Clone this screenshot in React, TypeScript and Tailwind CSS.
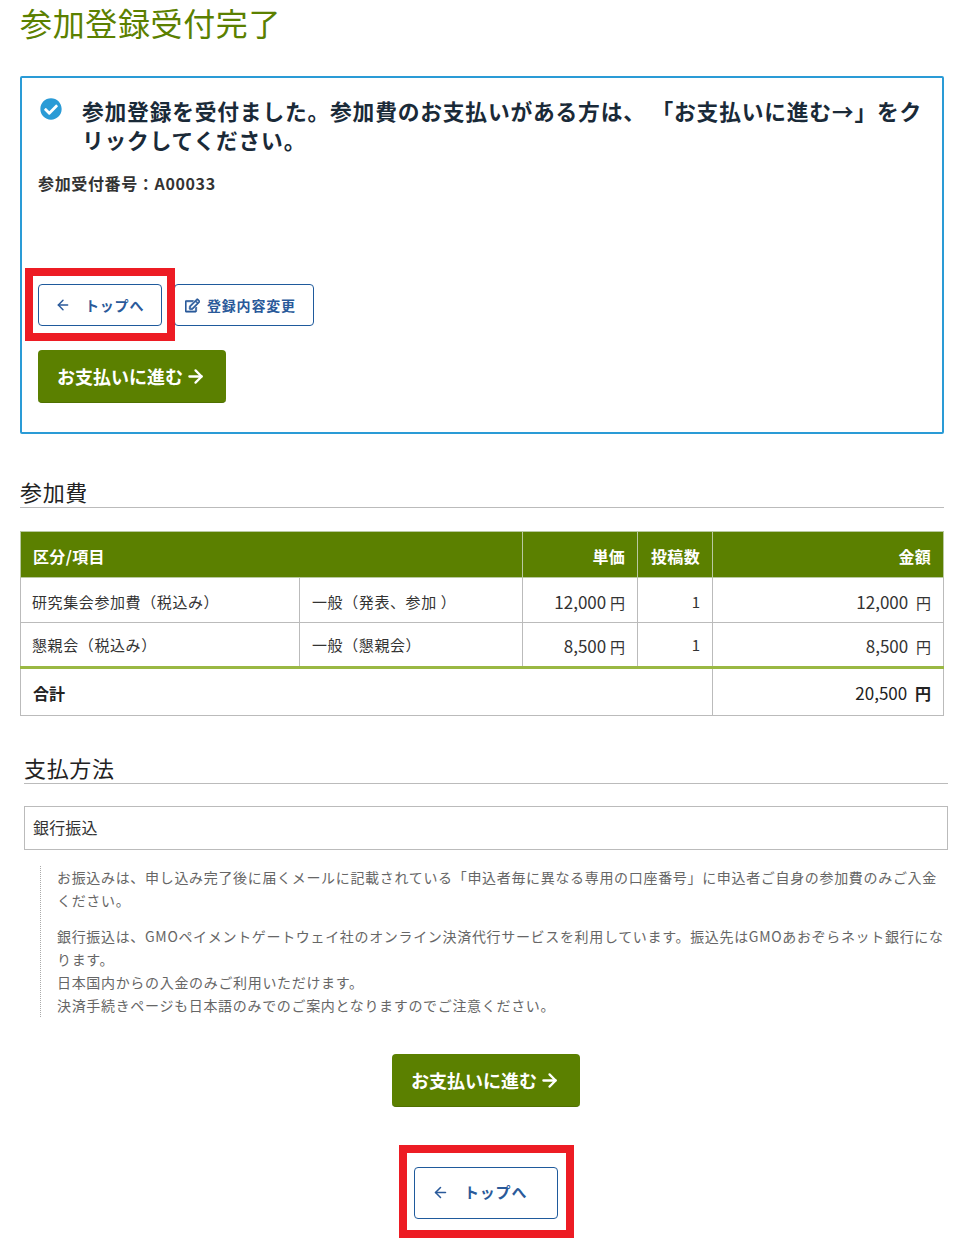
import React from 'react';
import { ArrowLeft, ArrowRight } from 'lucide-react';
import { FaCheckCircle, FaRegEdit } from 'react-icons/fa';

const FONT = '"Noto Sans CJK JP", "Noto Sans", sans-serif';

function PayButton() {
  return (
    <button className="w-[188px] h-[53px] bg-[#5b8000] rounded-[4px] border-b border-[#4f7000] text-white text-[18px] font-bold tracking-normal flex items-center pl-[19px]">
      お支払いに進む
      <ArrowRight className="ml-[2px]" size={21} strokeWidth={2.6} />
    </button>
  );
}

function SectionTitle({ children, className }: { children: React.ReactNode; className: string }) {
  return (
    <h2 className={`text-[22px] leading-[26px] pb-[3px] tracking-[0.03em] text-[#222] border-b border-[#bbbbbb] ${className}`}>
      {children}
    </h2>
  );
}

export default function App() {
  return (
    <div
      className="relative h-[1239px] overflow-hidden bg-white text-[#222] tracking-[0.05em]"
      style={{ fontFamily: FONT }}
    >
      <h1 className="pl-5 text-[32px] leading-[44px] font-normal tracking-[0.02em] text-[#5b8000]">
        参加登録受付完了
      </h1>

      {/* Completion box */}
      <div className="mt-8 ml-5 w-[924px] h-[358px] border-2 border-[#2a9bd6] rounded-[2px] pt-[20px] pl-4">
        <div className="flex items-start">
          <FaCheckCircle className="ml-[2px] shrink-0 text-[#2a9bd6] text-[22px]" />
          <p className="ml-[20px] pr-3 -mt-[2px] text-[21.75px] leading-[29px] font-bold text-[#1a2a38]">
            参加登録を受付ました。参加費のお支払いがある方は、 「お支払いに進む→」をクリックしてください。
          </p>
        </div>
        <p className="mt-[17px] text-[16px] leading-[24px] font-bold tracking-[0.04em] text-[#333]">参加受付番号：A00033</p>

        <div className="mt-[89px] flex gap-3">
          <div className="relative">
            <button className="w-[124px] h-[42px] border border-[#1f5a9c] rounded-[4px] text-[#2a5a9a] text-[14px] font-bold flex items-center pl-[16px]">
              <ArrowLeft size={16} strokeWidth={2.2} />
              <span className="ml-[14px]">トップへ</span>
            </button>
            <div className="absolute -left-[13px] -top-[16px] -right-[13px] -bottom-[15px] border-[8px] border-[#ed1c24]" />
          </div>
          <button className="w-[140px] h-[42px] border border-[#1f5a9c] rounded-[4px] text-[#2a5a9a] text-[14px] font-bold flex items-center pl-[10px]">
            <FaRegEdit className="text-[15px]" stroke="currentColor" strokeWidth={24} />
            <span className="ml-[7px]">登録内容変更</span>
          </button>
        </div>

        <div className="mt-[24px]">
          <PayButton />
        </div>
      </div>

      {/* Fees */}
      <SectionTitle className="mt-[44px] ml-5 w-[924px]">参加費</SectionTitle>
      <table className="mt-[23px] ml-5 w-[923px] table-fixed border-collapse text-[15px] tracking-[0.04em]">
        <colgroup>
          <col className="w-[279px]" />
          <col className="w-[223px]" />
          <col className="w-[115px]" />
          <col className="w-[75px]" />
          <col className="w-[231px]" />
        </colgroup>
        <thead>
          <tr className="h-[46px] bg-[#5b8000] text-white text-[16px] font-bold">
            <th colSpan={2} className="border border-[#b9c9a0] px-3 pt-[3px] text-left tracking-[0.02em]">区分/項目</th>
            <th className="border border-[#b9c9a0] px-3 pt-[3px] text-right tracking-[0.02em]">単価</th>
            <th className="border border-[#b9c9a0] px-3 pt-[3px] text-right tracking-[0.02em]">投稿数</th>
            <th className="border border-[#b9c9a0] px-3 pt-[3px] text-right tracking-[0.02em]">金額</th>
          </tr>
        </thead>
        <tbody className="text-[#333]">
          <tr className="h-[45px]">
            <td className="border border-[#bbbbbb] pl-[11px] pr-3 pt-[4px]">研究集会参加費（税込み）</td>
            <td className="border border-[#bbbbbb] px-3 pt-[4px]">一般（発表、参加 ）</td>
            <td className="border border-[#bbbbbb] px-3 pt-[4px] text-right tracking-normal text-[17px]">12,000 <span className="text-[15px]">円</span></td>
            <td className="border border-[#bbbbbb] px-3 pt-[4px] text-right text-[15px] tracking-normal">1</td>
            <td className="border border-[#bbbbbb] px-3 pt-[4px] text-right tracking-normal text-[17px]">12,000 <span className="ml-1 text-[15px]">円</span></td>
          </tr>
          <tr className="h-[45px]">
            <td className="border border-[#bbbbbb] border-b-[3px] border-b-[#9ab843] pl-[11px] pr-3 pt-[2px]">懇親会（税込み）</td>
            <td className="border border-[#bbbbbb] border-b-[3px] border-b-[#9ab843] px-3 pt-[2px]">一般（懇親会）</td>
            <td className="border border-[#bbbbbb] border-b-[3px] border-b-[#9ab843] px-3 pt-[2px] text-right tracking-normal text-[17px]">8,500 <span className="text-[15px]">円</span></td>
            <td className="border border-[#bbbbbb] border-b-[3px] border-b-[#9ab843] px-3 pt-[2px] text-right text-[15px] tracking-normal">1</td>
            <td className="border border-[#bbbbbb] border-b-[3px] border-b-[#9ab843] px-3 pt-[2px] text-right tracking-normal text-[17px]">8,500 <span className="ml-1 text-[15px]">円</span></td>
          </tr>
          <tr className="h-[48px]">
            <td colSpan={4} className="border border-[#bbbbbb] px-3 pt-[2px] text-[16px] tracking-normal font-bold text-[#222]">合計</td>
            <td className="border border-[#bbbbbb] px-3 pt-[2px] text-right tracking-normal text-[17px] text-[#222]">20,500 <span className="ml-1 text-[16px] font-bold">円</span></td>
          </tr>
        </tbody>
      </table>

      {/* Payment method */}
      <SectionTitle className="mt-[38px] ml-6 w-[924px]">支払方法</SectionTitle>
      <div className="mt-[22px] ml-6 w-[924px] h-[44px] border border-[#bbbbbb] flex items-center pl-2 pb-[2px] text-[16px] tracking-[0.01em] text-[#333]">
        銀行振込
      </div>
      <div className="mt-[16px] ml-10 w-[908px] border-l border-dotted border-[#aaaaaa] pl-4 text-[14px] leading-[23px] tracking-[0.048em] text-[#666]">
        <p>お振込みは、申し込み完了後に届くメールに記載されている「申込者毎に異なる専用の口座番号」に申込者ご自身の参加費のみご入金ください。</p>
        <p className="mt-[13px]">
          銀行振込は、GMOペイメントゲートウェイ社のオンライン決済代行サービスを利用しています。振込先はGMOあおぞらネット銀行になります。
          <br />
          日本国内からの入金のみご利用いただけます。
          <br />
          決済手続きページも日本語のみでのご案内となりますのでご注意ください。
        </p>
      </div>

      <div className="mt-[37px] ml-6 w-[924px] flex flex-col items-center">
        <PayButton />
        <div className="relative mt-[60px]">
          <button className="w-[144px] h-[52px] border border-[#1f5a9c] rounded-[4px] text-[#2a5a9a] text-[15px] font-bold flex items-center pl-[17px] pb-[1px]">
            <ArrowLeft size={17} strokeWidth={2.2} />
            <span className="ml-[15px]">トップへ</span>
          </button>
          <div className="absolute -left-[15px] -top-[22px] -right-[16px] -bottom-[19px] border-[8px] border-[#ed1c24]" />
        </div>
      </div>
    </div>
  );
}
